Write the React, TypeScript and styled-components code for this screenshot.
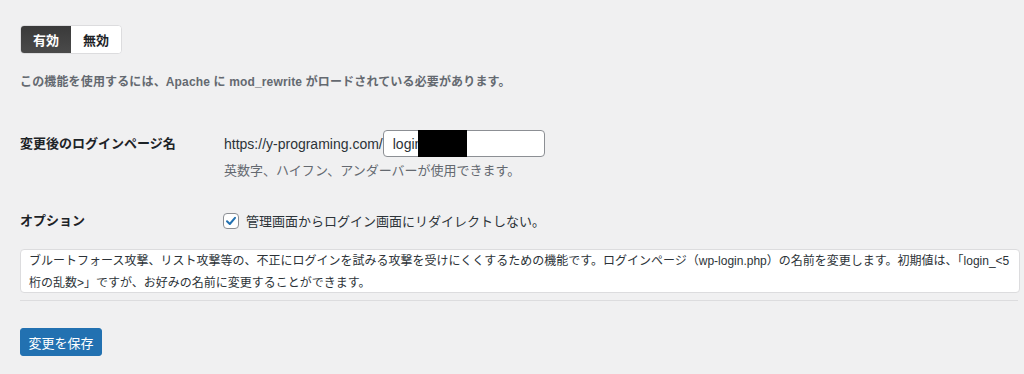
import React from "react";
import styled, { createGlobalStyle } from "styled-components";

const Global = createGlobalStyle`
  html, body { margin: 0; padding: 0; background: #f0f0f1; }
  body {
    font-family: "Liberation Sans", "Noto Sans CJK JP", sans-serif;
    font-size: 13px;
    color: #1d2327;
  }
`;

const Page = styled.div`
  padding: 25px 4px 0 20px;
  display: flex;
  flex-direction: column;
`;

const Toggle = styled.div`
  display: flex;
  align-self: flex-start;
  border: 1px solid #dcdcde;
  border-radius: 4px;
  overflow: hidden;
  background: #fff;
`;

const ToggleBtn = styled.div<{ $active?: boolean }>`
  width: 50px;
  height: 27px;
  display: flex;
  align-items: center;
  justify-content: center;
  font-weight: bold;
  font-size: 13px;
  color: ${(p) => (p.$active ? "#fff" : "#1d2327")};
  background: ${(p) => (p.$active ? "linear-gradient(#3a3a3a, #4a4a4a)" : "#fff")};
`;

const Notice = styled.p`
  margin: 18px 0 0;
  font-size: 12px;
  font-weight: bold;
  color: #646970;
  line-height: 20px;
  letter-spacing: 0.15px;
`;

const Row = styled.div<{ $top: number }>`
  display: grid;
  grid-template-columns: 204px 1fr;
  margin-top: ${(p) => p.$top}px;
`;

const Label = styled.div`
  font-weight: bold;
  font-size: 13px;
  line-height: 27px;
`;

const Field = styled.div`
  display: flex;
  flex-direction: column;
`;

const UrlLine = styled.div`
  display: flex;
  align-items: center;
  height: 27px;
  font-size: 14px;
  color: #2c3338;
`;

const InputWrap = styled.div`
  position: relative;
  width: 162px;
  height: 27px;
  box-sizing: border-box;
  border: 1px solid #8c8f94;
  border-radius: 4px;
  background: #fff;
  display: flex;
  align-items: center;
  padding-left: 9px;
  font-size: 14px;
  color: #2c3338;
`;

const Redact = styled.div`
  position: absolute;
  left: 34px;
  top: -1px;
  width: 49px;
  height: 27px;
  background: #000;
`;

const Desc = styled.p`
  margin: 4px 0 0;
  font-size: 13px;
  line-height: 20px;
  color: #646970;
`;

const CheckLine = styled.label`
  display: flex;
  align-items: center;
  gap: 7px;
  height: 27px;
  font-size: 13px;
  color: #2c3338;
`;

const Box = styled.span`
  width: 16px;
  height: 16px;
  box-sizing: border-box;
  border: 1px solid #8c8f94;
  border-radius: 4px;
  background: #fff;
  display: inline-flex;
  align-items: center;
  justify-content: center;
  margin-left: -1px;
`;

const Info = styled.div`
  margin-top: 15px;
  box-sizing: border-box;
  width: 1000px;
  height: 44px;
  background: #fff;
  border: 1px solid #dcdcde;
  border-radius: 4px;
  padding: 0 8px;
  font-size: 12px;
  line-height: 22px;
  color: #2c3338;
`;

const Divider = styled.hr`
  margin: 7px 0 0;
  width: 998px;
  border: 0;
  border-top: 1px solid #dcdcde;
`;

const SaveButton = styled.button`
  margin-top: 27px;
  align-self: flex-start;
  width: 82px;
  height: 28px;
  background: #2271b1;
  border: 1px solid #2271b1;
  border-radius: 3px;
  color: #fff;
  font-family: "Liberation Sans", "Noto Sans CJK JP", sans-serif;
  font-size: 13px;
  padding: 0;
`;

export default function App() {
  return (
    <>
      <Global />
      <Page>
        <Toggle>
          <ToggleBtn $active>有効</ToggleBtn>
          <ToggleBtn>無効</ToggleBtn>
        </Toggle>
        <Notice>この機能を使用するには、Apache に mod_rewrite がロードされている必要があります。</Notice>
        <Row $top={38}>
          <Label>変更後のログインページ名</Label>
          <Field>
            <UrlLine>
              https://y-programing.com/
              <InputWrap>
                login
                <Redact />
              </InputWrap>
            </UrlLine>
            <Desc>英数字、ハイフン、アンダーバーが使用できます。</Desc>
          </Field>
        </Row>
        <Row $top={26}>
          <Label>オプション</Label>
          <CheckLine>
            <Box>
              <svg width="12" height="12" viewBox="0 0 12 12">
                <path d="M2 6.2 L4.8 9 L10 2.8" fill="none" stroke="#2271b1" strokeWidth="2" strokeLinecap="round" strokeLinejoin="round" />
              </svg>
            </Box>
            管理画面からログイン画面にリダイレクトしない。
          </CheckLine>
        </Row>
        <Info>
          ブルートフォース攻撃、リスト攻撃等の、不正にログインを試みる攻撃を受けにくくするための機能です。ログインページ（wp-login.php）の名前を変更します。初期値は、「login_&lt;5桁の乱数&gt;」ですが、お好みの名前に変更することができます。
        </Info>
        <Divider />
        <SaveButton>変更を保存</SaveButton>
      </Page>
    </>
  );
}
